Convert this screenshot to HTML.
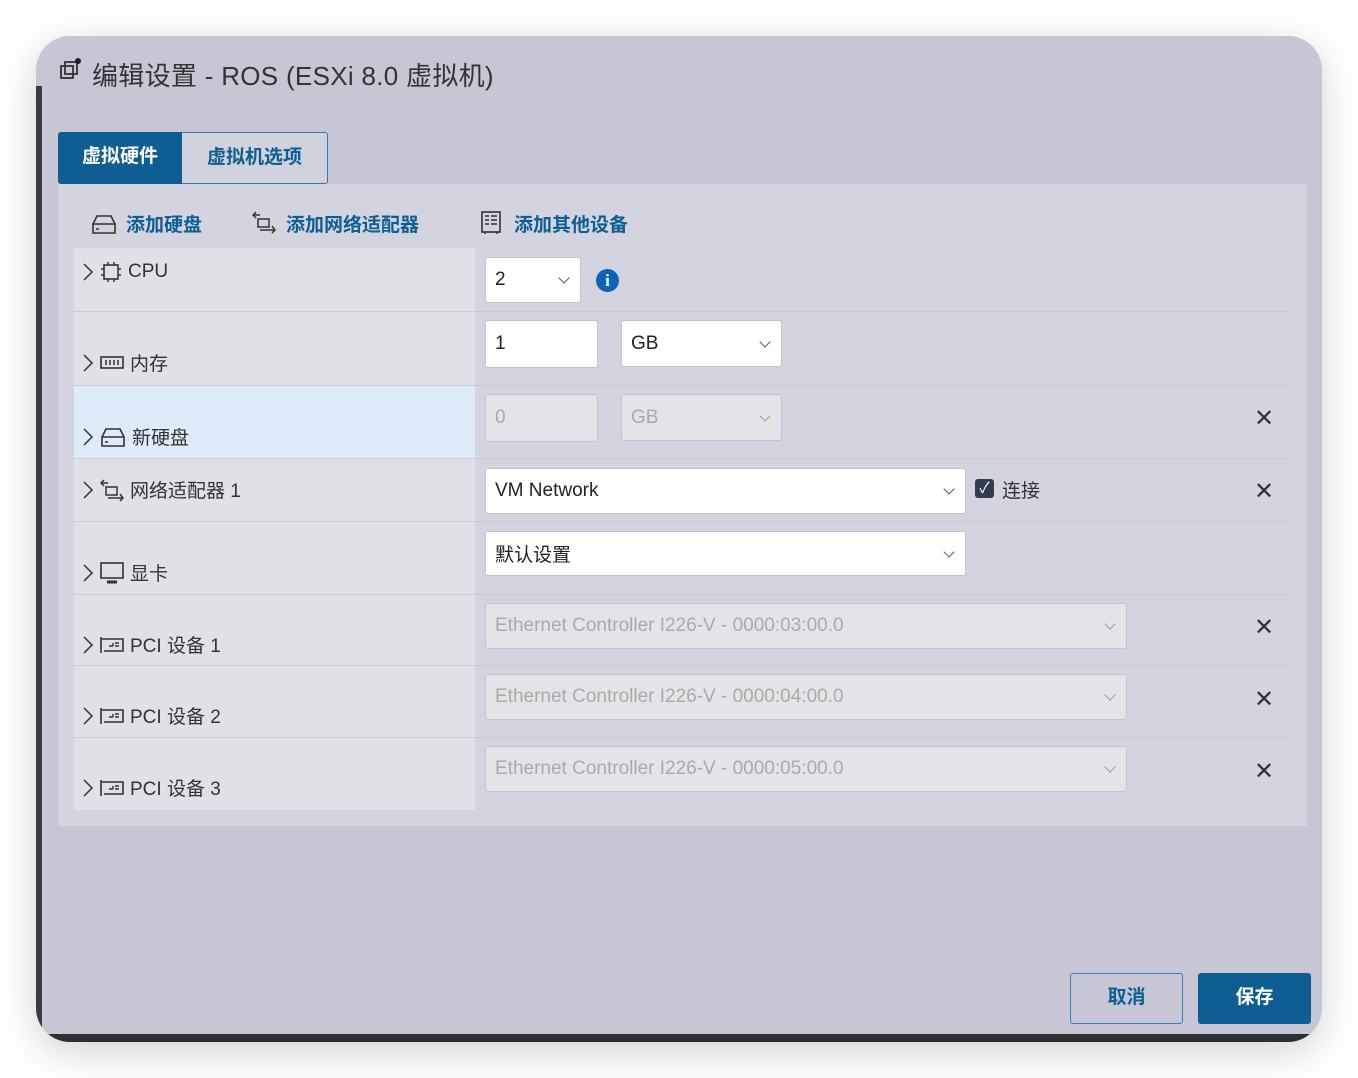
<!DOCTYPE html>
<html><head><meta charset="utf-8"><style>
*{box-sizing:border-box;margin:0;padding:0}
body{width:1358px;height:1078px;background:#fff;position:relative;overflow:hidden;font-family:"Liberation Sans","Noto Sans CJK SC",sans-serif;color:#333}
.dlg{position:absolute;left:36px;top:36px;width:1286px;height:1006px;border-radius:34px;background:#c6c6d4;overflow:hidden;box-shadow:0 10px 40px rgba(0,0,0,.18)}
.dlg:before{content:"";position:absolute;left:0;top:50px;width:6px;height:960px;background:#3a3a40}
.dlg:after{content:"";position:absolute;left:0;bottom:0;width:100%;height:8px;background:#2e2e34}
.t{position:absolute;font-size:26px;color:#333;letter-spacing:0.3px}
.tab{position:absolute;top:132px;height:52px;font-size:19px;font-weight:bold;line-height:50px;text-align:center}
.panel{position:absolute;left:58px;top:184px;width:1249px;height:642px;background:#d3d4df}
.add{position:absolute;top:210px;font-size:19px;font-weight:bold;color:#0d5e93}
.row{position:absolute;left:74px;width:1216px;border-bottom:1px solid #cbcbd6}
.lc{position:absolute;left:0;top:0;width:401px;height:100%;background:#e0e0e6}
.lab{position:absolute;left:8px;font-size:19px;color:#333;display:flex;align-items:center;gap:6px}
.box{position:absolute;background:#fff;border:1px solid #c4c4c8;border-radius:3px;font-size:19px;padding-left:9px;display:flex;align-items:center;color:#222}
.dis{background:#e4e4e8;color:#aaa}
.chev{position:absolute;right:12px;top:50%;margin-top:-6px;width:8px;height:8px;border-right:1.5px solid #555;border-bottom:1.5px solid #555;transform:rotate(45deg)}
.x{position:absolute;left:1180px;font-size:24px;color:#333}
svg{display:block}
</style></head><body>
<div class="dlg"></div>
<svg style="position:absolute;left:60px;top:58px" width="22" height="24" viewBox="0 0 22 24"><rect x="1" y="8" width="12" height="12" fill="none" stroke="#333" stroke-width="1.8"/><rect x="5" y="4" width="12" height="12" fill="none" stroke="#333" stroke-width="1.8"/><circle cx="18" cy="3" r="3" fill="#222"/></svg>
<div class="t" style="left:92px;top:56px">编辑设置 - ROS (ESXi 8.0 虚拟机)</div>
<div class="tab" style="left:58px;width:124px;background:#0f5e93;color:#fff;border-radius:3px 0 0 3px">虚拟硬件</div>
<div class="tab" style="left:182px;width:146px;border:1px solid #3479ab;border-left:none;color:#0d5e93;border-radius:0 3px 3px 0;background:#d0d2dd">虚拟机选项</div>
<div class="panel"></div>
<svg style="position:absolute;left:91px;top:213px" width="26" height="22"><path d="M2 20V11L6 3H20L24 11V20Z M2 11H24 M5 16H8" fill="none" stroke="#333" stroke-width="1.6"/></svg>
<div class="add" style="left:126px">添加硬盘</div>
<svg style="position:absolute;left:252px;top:210px" width="24" height="24"><path d="M4 2L1 5 4 8M1 5H8M6 9H17V17H6Z M20 16L23 20 20 23M8 20H23" fill="none" stroke="#333" stroke-width="1.5"/></svg>
<div class="add" style="left:286px">添加网络适配器</div>
<svg style="position:absolute;left:481px;top:211px" width="20" height="24"><rect x="1" y="1" width="18" height="20" fill="none" stroke="#333" stroke-width="1.6"/><path d="M4 5H8M4 9H8M4 13H8M10 5H16M10 9H16M10 13H16M4 21V23M16 21V23" stroke="#333" stroke-width="1.5"/></svg>
<div class="add" style="left:514px">添加其他设备</div>

<div class="row" style="top:248px;height:64px"><div class="lc"></div>
<div class="lab" style="top:13px"><svg width="12" height="20"><path d="M2 2L10 10 2 18" fill="none" stroke="#333" stroke-width="1.5"/></svg>
<svg width="22" height="22"><rect x="4" y="4" width="14" height="14" fill="none" stroke="#333" stroke-width="1.6"/><path d="M8 1V4M14 1V4M8 18V21M14 18V21M1 8H4M1 14H4M18 8H21M18 14H21" stroke="#333" stroke-width="1.4"/></svg>CPU</div>
<div class="box" style="left:411px;top:9px;width:96px;height:46px">2<i class="chev"></i></div>
<div style="position:absolute;left:522px;top:21px;width:23px;height:23px;border-radius:50%;background:#0d63b8;color:#fff;font:bold 17px 'Liberation Serif',serif;text-align:center;line-height:23px">i</div></div>

<div class="row" style="top:312px;height:74px"><div class="lc"></div>
<div class="lab" style="top:37px"><svg width="12" height="20"><path d="M2 2L10 10 2 18" fill="none" stroke="#333" stroke-width="1.5"/></svg><svg width="24" height="16"><rect x="1" y="2" width="22" height="11" fill="none" stroke="#333" stroke-width="1.6"/><path d="M6 5V10M10 5V10M14 5V10M18 5V10" stroke="#333" stroke-width="1.5"/></svg>内存</div>
<div class="box" style="left:411px;top:8px;width:113px;height:48px">1</div>
<div class="box" style="left:547px;top:8px;width:161px;height:47px">GB<i class="chev"></i></div></div>

<div class="row" style="top:386px;height:73px"><div class="lc" style="background:#deebf9"></div>
<div class="lab" style="top:37px"><svg width="12" height="20"><path d="M2 2L10 10 2 18" fill="none" stroke="#333" stroke-width="1.5"/></svg><svg width="26" height="22"><path d="M2 20V11L6 3H20L24 11V20Z M2 11H24 M5 16H8" fill="none" stroke="#333" stroke-width="1.6"/></svg>新硬盘</div>
<div class="box dis" style="left:411px;top:8px;width:113px;height:48px">0</div>
<div class="box dis" style="left:547px;top:8px;width:161px;height:47px">GB<i class="chev" style="border-color:#999"></i></div>
<div class="x" style="top:18px">✕</div></div>

<div class="row" style="top:459px;height:63px"><div class="lc"></div>
<div class="lab" style="top:17px"><svg width="12" height="20"><path d="M2 2L10 10 2 18" fill="none" stroke="#333" stroke-width="1.5"/></svg><svg width="24" height="24"><path d="M4 2L1 5 4 8M1 5H8M6 9H17V17H6Z M20 16L23 20 20 23M8 20H23" fill="none" stroke="#333" stroke-width="1.5"/></svg>网络适配器 1</div>
<div class="box" style="left:411px;top:9px;width:481px;height:46px">VM Network<i class="chev"></i></div>
<div style="position:absolute;left:901px;top:20px;width:19px;height:19px;background:#2c3e50;border-radius:3px;color:#fff;font-size:15px;text-align:center;line-height:19px">✓</div>
<div style="position:absolute;left:928px;top:17px;font-size:19px">连接</div>
<div class="x" style="top:18px">✕</div></div>

<div class="row" style="top:522px;height:73px"><div class="lc"></div>
<div class="lab" style="top:37px"><svg width="12" height="20"><path d="M2 2L10 10 2 18" fill="none" stroke="#333" stroke-width="1.5"/></svg><svg width="24" height="22"><rect x="1" y="1" width="22" height="15" fill="none" stroke="#333" stroke-width="1.6"/><path d="M7 20H17" stroke="#333" stroke-width="3"/></svg>显卡</div>
<div class="box" style="left:411px;top:9px;width:481px;height:45px">默认设置<i class="chev"></i></div></div>

<div class="row" style="top:595px;height:71px"><div class="lc"></div>
<div class="lab" style="top:36px"><svg width="12" height="20"><path d="M2 2L10 10 2 18" fill="none" stroke="#333" stroke-width="1.5"/></svg><svg width="24" height="18"><path d="M1 1V17M1 3H23V15H4" fill="none" stroke="#333" stroke-width="1.6"/><path d="M9 10H13M15 7H19M15 10H19M13 7V10" stroke="#333" stroke-width="1.4"/></svg>PCI 设备 1</div>
<div class="box dis" style="left:411px;top:8px;width:642px;height:46px">Ethernet Controller I226-V - 0000:03:00.0<i class="chev" style="border-color:#999"></i></div>
<div class="x" style="top:18px">✕</div></div>

<div class="row" style="top:666px;height:72px"><div class="lc"></div>
<div class="lab" style="top:36px"><svg width="12" height="20"><path d="M2 2L10 10 2 18" fill="none" stroke="#333" stroke-width="1.5"/></svg><svg width="24" height="18"><path d="M1 1V17M1 3H23V15H4" fill="none" stroke="#333" stroke-width="1.6"/><path d="M9 10H13M15 7H19M15 10H19M13 7V10" stroke="#333" stroke-width="1.4"/></svg>PCI 设备 2</div>
<div class="box dis" style="left:411px;top:8px;width:642px;height:46px">Ethernet Controller I226-V - 0000:04:00.0<i class="chev" style="border-color:#999"></i></div>
<div class="x" style="top:19px">✕</div></div>

<div class="row" style="top:738px;height:72px;border:none"><div class="lc"></div>
<div class="lab" style="top:36px"><svg width="12" height="20"><path d="M2 2L10 10 2 18" fill="none" stroke="#333" stroke-width="1.5"/></svg><svg width="24" height="18"><path d="M1 1V17M1 3H23V15H4" fill="none" stroke="#333" stroke-width="1.6"/><path d="M9 10H13M15 7H19M15 10H19M13 7V10" stroke="#333" stroke-width="1.4"/></svg>PCI 设备 3</div>
<div class="box dis" style="left:411px;top:8px;width:642px;height:46px">Ethernet Controller I226-V - 0000:05:00.0<i class="chev" style="border-color:#999"></i></div>
<div class="x" style="top:19px">✕</div></div>

<div style="position:absolute;left:1070px;top:973px;width:113px;height:51px;border:1.5px solid #3f7fae;border-radius:3px;color:#0d5e93;font-size:19px;font-weight:bold;text-align:center;line-height:48px">取消</div>
<div style="position:absolute;left:1198px;top:973px;width:113px;height:51px;background:#0f5e93;border-radius:3px;color:#fff;font-size:19px;font-weight:bold;text-align:center;line-height:50px">保存</div>
</body></html>
